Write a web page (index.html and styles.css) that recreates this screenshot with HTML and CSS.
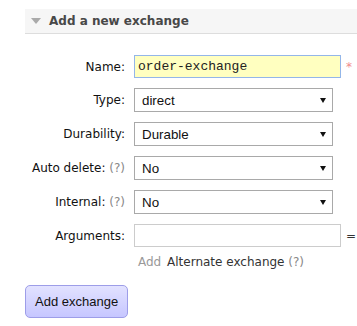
FILE: index.html
```html
<!DOCTYPE html>
<html lang="en">
<head>
    <meta charset="UTF-8">
    <title>Add a new exchange</title>
    <link rel="stylesheet" href="styles.css">
</head>
<body>
    <div class="section">
        <h2 class="section-title"><span class="toggle"></span>Add a new exchange</h2>
        <form class="exchange-form">
            <label for="name">Name:</label>
            <input type="text" id="name" class="mandatory" value="order-exchange">
            <span class="required">*</span>

            <label for="type">Type:</label>
            <span class="select-wrap">
                <select id="type">
                    <option>direct</option>
                    <option>fanout</option>
                    <option>headers</option>
                    <option>topic</option>
                </select>
            </span>
            <span></span>

            <label for="durable">Durability:</label>
            <span class="select-wrap">
                <select id="durable">
                    <option>Durable</option>
                    <option>Transient</option>
                </select>
            </span>
            <span></span>

            <label for="autoDelete">Auto delete: <span class="help">(?)</span></label>
            <span class="select-wrap">
                <select id="autoDelete">
                    <option>No</option>
                    <option>Yes</option>
                </select>
            </span>
            <span></span>

            <label for="internal">Internal: <span class="help">(?)</span></label>
            <span class="select-wrap">
                <select id="internal">
                    <option>No</option>
                    <option>Yes</option>
                </select>
            </span>
            <span></span>

            <label for="args">Arguments:</label>
            <input type="text" id="args" class="plain">
            <span class="equals">=</span>

            <span></span>
            <div class="argument-links">
                <span class="add">Add</span> Alternate exchange <span class="help">(?)</span>
            </div>
            <span></span>
        </form>
        <button type="button" class="add-button">Add exchange</button>
    </div>
</body>
</html>
```

FILE: styles.css
```css
body {
    margin: 0;
    font-family: "DejaVu Sans", Verdana, sans-serif;
    font-size: 12px;
    color: #111;
    background-color: #fff;
}
.section {
    padding-top: 9px;
    margin-left: 25px;
}
.section-title {
    display: flex;
    align-items: center;
    height: 24px;
    margin: 0;
    padding-left: 6px;
    font-size: 12px;
    font-weight: bold;
    color: #484848;
    background-color: #f6f6f6;
    border-bottom: 1px solid #ddd;
}
.toggle {
    width: 0;
    height: 0;
    margin-right: 8px;
    border-left: 5.5px solid transparent;
    border-right: 5.5px solid transparent;
    border-top: 6px solid #aaa;
}
.exchange-form {
    display: grid;
    grid-template-columns: 100px 207px auto;
    grid-template-rows: 23px 24px 24px 24px 24px 23px auto;
    column-gap: 9px;
    row-gap: 10px;
    align-items: center;
    margin-top: 21px;
}
.exchange-form label {
    text-align: right;
    white-space: nowrap;
}
.help {
    color: #888;
}
input[type="text"] {
    box-sizing: border-box;
    width: 207px;
    height: 23px;
    padding: 0 3px;
    font-family: "Liberation Mono", "Courier New", monospace;
    font-size: 13px;
    color: #222;
    border: 1px solid #ccc;
    outline: none;
}
input.mandatory {
    background-color: #ffffc0;
    border-color: #93b6e9;
}
.required,
.equals {
    margin-left: -4px;
}
.required {
    color: #f28b8b;
    font-size: 12px;
}
.equals {
    color: #333;
}
.select-wrap {
    position: relative;
    display: block;
    width: 199px;
    height: 24px;
}
.select-wrap::after {
    content: "";
    position: absolute;
    right: 7px;
    top: 10px;
    border-left: 3.5px solid transparent;
    border-right: 3.5px solid transparent;
    border-top: 5px solid #111;
    pointer-events: none;
}
select {
    -webkit-appearance: none;
    appearance: none;
    box-sizing: border-box;
    width: 199px;
    height: 24px;
    padding: 0 7px;
    font-family: "Liberation Sans", Arial, sans-serif;
    font-size: 13.33px;
    color: #111;
    background-color: #fff;
    border: 1px solid #a9a9a9;
    border-radius: 0;
}
.argument-links {
    margin-top: -2px;
    padding-left: 4px;
    line-height: 14px;
    white-space: nowrap;
    color: #333;
}
.argument-links .add {
    color: #999;
    margin-right: 2px;
}
.add-button {
    box-sizing: border-box;
    height: 33px;
    margin-top: 16px;
    padding: 0 9px;
    font-family: "Liberation Sans", Arial, sans-serif;
    font-size: 13px;
    color: #111;
    background: linear-gradient(#e2e2ff, #c6c6ff);
    border: 1px solid #9d9de8;
    border-radius: 5px;
    cursor: pointer;
}
.add-button:hover {
    background: #c6c6ff;
}
```
